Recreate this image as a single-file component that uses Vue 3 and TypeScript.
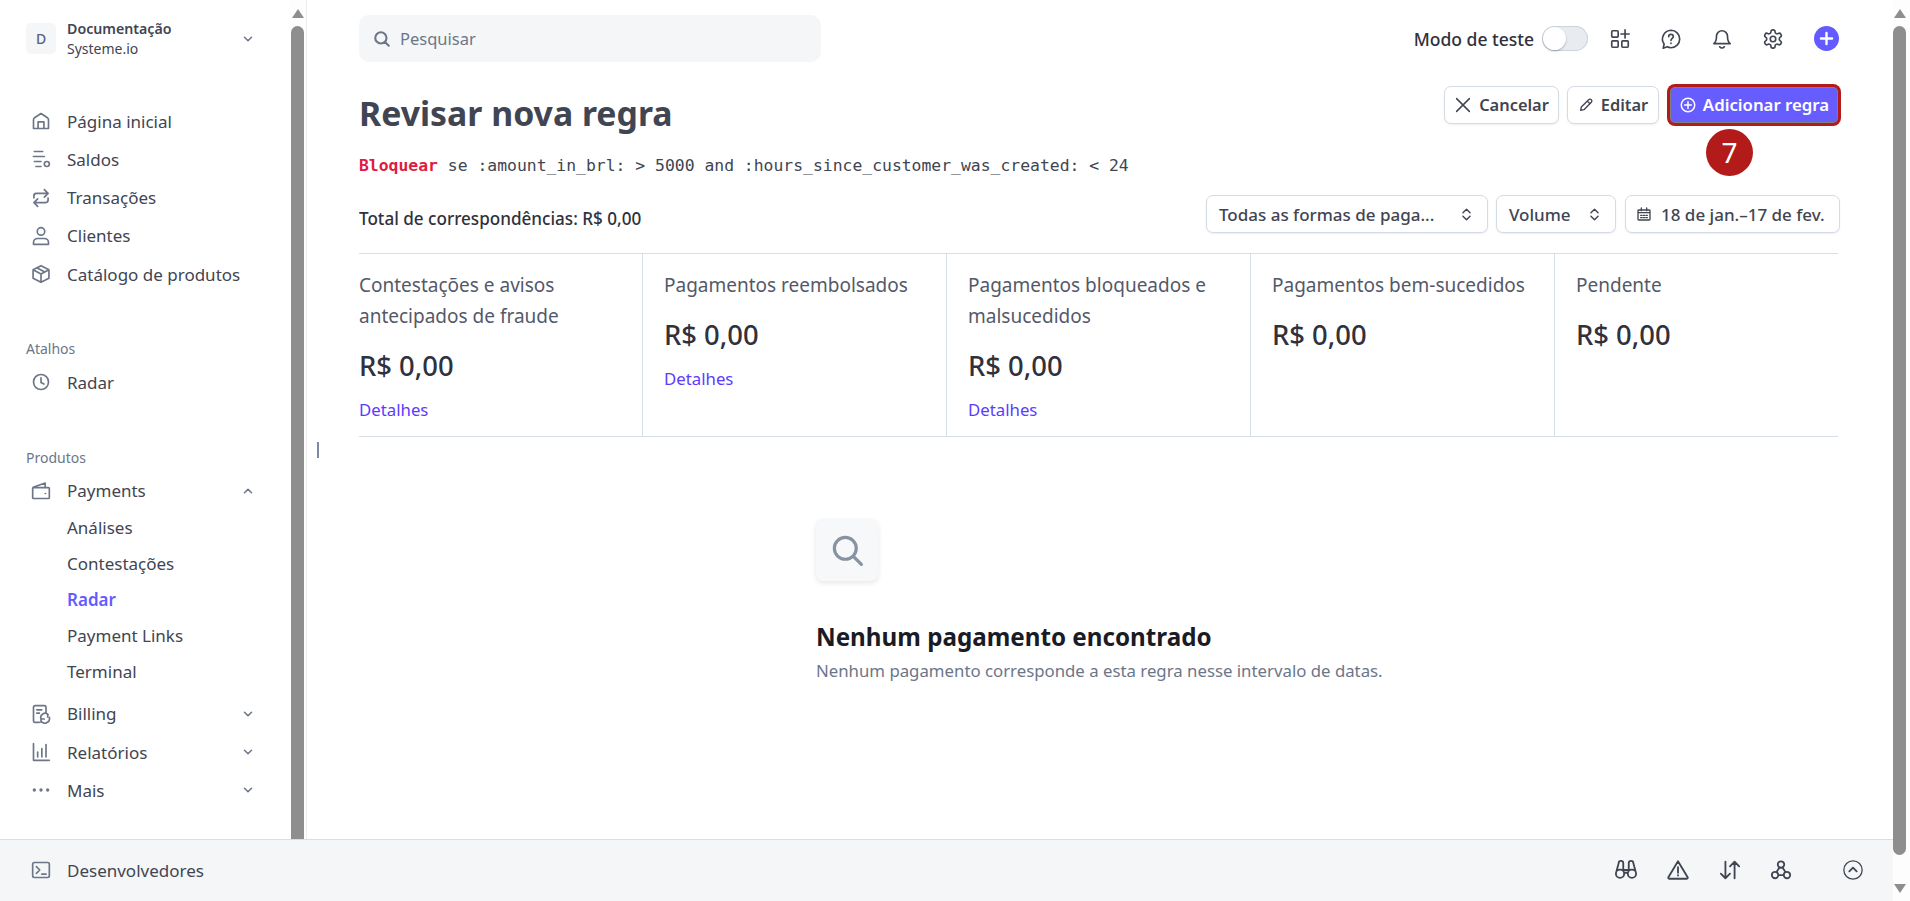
<template>
  <div class="page">
    <div class="left">
      <div class="upper">
        <aside class="sidebar">
          <div class="account">
            <div class="avatar">D</div>
            <div class="account-text">
              <div class="account-name">Documentação</div>
              <div class="account-sub">Systeme.io</div>
            </div>
            <svg class="chev" viewBox="0 0 24 24"><path d="M6 9l6 6 6-6" /></svg>
          </div>

          <nav class="group first">
            <a v-for="n in mainNav" :key="n.label" class="item">
              <svg class="ico" viewBox="0 0 24 24"><path :d="n.d" /></svg>
              <span>{{ n.label }}</span>
            </a>
          </nav>

          <nav class="group">
            <div class="group-label">Atalhos</div>
            <a class="item">
              <svg class="ico" viewBox="0 0 24 24"><path :d="icons.clock" /></svg>
              <span>Radar</span>
            </a>
          </nav>

          <nav class="group">
            <div class="group-label">Produtos</div>
            <a class="item">
              <svg class="ico" viewBox="0 0 24 24"><path :d="icons.wallet" /></svg>
              <span>Payments</span>
              <svg class="chev" viewBox="0 0 24 24"><path d="M6 15l6-6 6 6" /></svg>
            </a>
            <a v-for="s in subNav" :key="s" class="sub" :class="{ active: s === 'Radar' }">{{ s }}</a>
            <div class="more">
              <a v-for="n in moreNav" :key="n.label" class="item">
                <svg class="ico" viewBox="0 0 24 24"><path :d="n.d" /></svg>
                <span>{{ n.label }}</span>
                <svg class="chev" viewBox="0 0 24 24"><path d="M6 9l6 6 6-6" /></svg>
              </a>
            </div>
          </nav>
        </aside>

        <div class="scrollbar side-bar">
          <div class="arrow up"></div>
          <div class="thumb"></div>
        </div>

        <main class="main">
          <span class="caret"></span>
          <div class="topbar">
            <div class="search">
              <svg class="search-ico" viewBox="0 0 24 24"><path d="M18 10.500a7.500 7.500 0 1 1-15 0 7.500 7.500 0 0 1 15 0zM16 16l5 5" /></svg>
              <span>Pesquisar</span>
            </div>
            <div class="tools">
              <span class="test-label">Modo de teste</span>
              <span class="toggle"><span class="knob"></span></span>
              <svg class="tool" viewBox="0 0 24 24"><path :d="icons.apps" /></svg>
              <svg class="tool" viewBox="0 0 24 24"><path :d="icons.help" /></svg>
              <svg class="tool" viewBox="0 0 24 24"><path :d="icons.bell" /></svg>
              <svg class="tool" viewBox="0 0 24 24"><path :d="icons.gear" /></svg>
              <span class="plus-round">
                <svg viewBox="0 0 24 24"><path d="M12 5v14M5 12h14" /></svg>
              </span>
            </div>
          </div>

          <div class="head">
            <h1 class="title">Revisar nova regra</h1>
            <div class="actions">
              <button class="btn cancel" type="button">
                <svg class="btn-ico" viewBox="0 0 24 24"><path d="M3.500 3.500l17 17M20.500 3.500l-17 17" /></svg>
                Cancelar
              </button>
              <button class="btn edit" type="button">
                <svg class="btn-ico small" viewBox="0 0 24 24"><path d="M4 20l1-5L16 4a2.500 2.500 0 0 1 4 4L9 19zM14 6l4 4" /></svg>
                Editar
              </button>
              <div class="add-wrap">
                <button class="btn primary" type="button">
                  <svg class="btn-ico" viewBox="0 0 24 24"><path d="M21 12a9 9 0 1 1-18 0 9 9 0 0 1 18 0zM12 7.500v9M7.500 12h9" /></svg>
                  Adicionar regra
                </button>
                <span class="step">7</span>
              </div>
            </div>
          </div>

          <div class="rule"><b>Bloquear</b> se :amount_in_brl: &gt; 5000 and :hours_since_customer_was_created: &lt; 24</div>

          <div class="filters">
            <div class="total">Total de correspondências: R$ 0,00</div>
            <div class="selects">
              <button class="select wide" type="button">
                <span>Todas as formas de paga...</span>
                <svg class="updown" viewBox="0 0 24 24"><path d="M7 9.500l5-5 5 5M7 14.500l5 5 5-5" /></svg>
              </button>
              <button class="select vol" type="button">
                <span>Volume</span>
                <svg class="updown" viewBox="0 0 24 24"><path d="M7 9.500l5-5 5 5M7 14.500l5 5 5-5" /></svg>
              </button>
              <button class="select date" type="button">
                <svg class="cal" viewBox="0 0 24 24"><path d="M4 6h16a1 1 0 0 1 1 1v13a1 1 0 0 1-1 1H4a1 1 0 0 1-1-1V7a1 1 0 0 1 1-1zM3 10h18M8 3v4M16 3v4M7 14h2M11 14h2M15 14h2M7 17.500h2M11 17.500h2M15 17.500h2" /></svg>
                <span>18 de jan.–17 de fev.</span>
              </button>
            </div>
          </div>

          <section class="metrics">
            <div v-for="m in metrics" :key="m.label" class="metric">
              <div class="metric-label">{{ m.label }}</div>
              <div class="metric-value">R$ 0,00</div>
              <a v-if="m.link" class="metric-link">Detalhes</a>
            </div>
          </section>

          <section class="empty">
            <div class="empty-box">
              <svg viewBox="0 0 24 24"><path d="M18 10.500a7.500 7.500 0 1 1-15 0 7.500 7.500 0 0 1 15 0zM16 16l5.500 5.500" /></svg>
            </div>
            <div class="empty-title">Nenhum pagamento encontrado</div>
            <div class="empty-sub">Nenhum pagamento corresponde a esta regra nesse intervalo de datas.</div>
          </section>
        </main>
      </div>

      <footer class="footer">
        <svg class="ico" viewBox="0 0 24 24"><path :d="icons.terminal" /></svg>
        <span class="dev">Desenvolvedores</span>
        <div class="foot-tools">
          <svg class="foot" viewBox="0 0 24 24"><path :d="icons.binoculars" /></svg>
          <svg class="foot" viewBox="0 0 24 24"><path :d="icons.warning" /></svg>
          <svg class="foot" viewBox="0 0 24 24"><path :d="icons.sort" /></svg>
          <svg class="foot hook" viewBox="0 0 24 24"><path :d="icons.webhook" /></svg>
          <svg class="foot last" viewBox="0 0 24 24"><path d="M22 12a10 10 0 1 1-20 0 10 10 0 0 1 20 0z" class="thin" /><path d="M8 13.500l4-4 4 4" /></svg>
        </div>
      </footer>
    </div>

    <div class="scrollbar page-bar">
      <div class="arrow up"></div>
      <div class="thumb"></div>
      <div class="arrow down"></div>
    </div>
  </div>
</template>

<script setup lang="ts">
const icons = {
  home: 'M3 21V10.500c0-1 .4-1.800 1.300-2.400L12 3l7.700 5.100c.9.6 1.300 1.400 1.300 2.400V21zM8.500 21v-8h7v8',
  saldos: 'M4 3h10M3 9h13M4 15h8M6 21h6M22 18a3 3 0 1 1-6 0 3 3 0 0 1 6 0z',
  swap: 'M16 2l4.500 4.500L16 11M3.500 12V9.500a3 3 0 0 1 3-3h14M8 22l-4.500-4.500L8 13M20.500 12v2.500a3 3 0 0 1-3 3h-14',
  user: 'M16.500 6.500a4.500 4.500 0 1 1-9 0 4.500 4.500 0 0 1 9 0zM3 22v-2c0-2.800 2.200-5 5-5h8c2.800 0 5 2.200 5 5v2z',
  box: 'M12 2l9.500 5v10L12 22l-9.500-5V7zM2.500 7l9.500 5 9.500-5M12 12v10M7 4.500l9.500 5',
  clock: 'M21 12a9 9 0 1 1-18 0 9 9 0 0 1 18 0zM12 7v5.500l3.500 2',
  wallet: 'M2 9v11a1 1 0 0 0 1 1h18a1 1 0 0 0 1-1V9a1 1 0 0 0-1-1H3a1 1 0 0 0-1 1zM2.500 7.500L17 2.500V8M17 15h.5',
  billing: 'M10 22H5a2 2 0 0 1-2-2V4a2 2 0 0 1 2-2h11a2 2 0 0 1 2 2v7M7 7h6M7 11h3M22 16a5.500 5.500 0 0 1-9.500 5M12 18a5 5 0 0 1 8.500-5M12 22v-4h4M20 12v3.500',
  chart: 'M3 2v20h19M8 12v6M13 8v10M18 3v15',
  dots: 'M5 12a1 1 0 1 1-2 0 1 1 0 0 1 2 0zM13 12a1 1 0 1 1-2 0 1 1 0 0 1 2 0zM21 12a1 1 0 1 1-2 0 1 1 0 0 1 2 0z',
  terminal: 'M4 3h16a2 2 0 0 1 2 2v14a2 2 0 0 1-2 2H4a2 2 0 0 1-2-2V5a2 2 0 0 1 2-2zM6.500 8l4 4-4 4M13 17h5',
  apps: 'M4 3h5a1 1 0 0 1 1 1v5a1 1 0 0 1-1 1H4a1 1 0 0 1-1-1V4a1 1 0 0 1 1-1zM4 14h5a1 1 0 0 1 1 1v5a1 1 0 0 1-1 1H4a1 1 0 0 1-1-1v-5a1 1 0 0 1 1-1zM15 14h5a1 1 0 0 1 1 1v5a1 1 0 0 1-1 1h-5a1 1 0 0 1-1-1v-5a1 1 0 0 1 1-1zM17.500 2v9M13 6.500h9',
  help: 'M12 2.500a9.500 9.500 0 0 1 0 19c-1.500 0-3-.3-4.200-1L3.500 22l1-4.500A9.500 9.500 0 0 1 12 2.500zM9.500 9.500a2.500 2.500 0 0 1 5 0c0 1.800-2.500 2-2.500 4M12 16.500v.5',
  bell: 'M6 9a6 6 0 0 1 12 0c0 6 3 8 3 8H3s3-2 3-8zM9.500 20.500a3 3 0 0 0 5 0',
  gear: 'M12.220 2h-.44a2 2 0 0 0-2 2v.18a2 2 0 0 1-1 1.730l-.43.25a2 2 0 0 1-2 0l-.15-.08a2 2 0 0 0-2.730.73l-.22.38a2 2 0 0 0 .73 2.730l.15.1a2 2 0 0 1 1 1.720v.51a2 2 0 0 1-1 1.740l-.15.09a2 2 0 0 0-.73 2.730l.22.38a2 2 0 0 0 2.730.73l.15-.08a2 2 0 0 1 2 0l.43.25a2 2 0 0 1 1 1.730V20a2 2 0 0 0 2 2h.44a2 2 0 0 0 2-2v-.18a2 2 0 0 1 1-1.730l.43-.25a2 2 0 0 1 2 0l.15.08a2 2 0 0 0 2.730-.73l.22-.39a2 2 0 0 0-.73-2.730l-.15-.08a2 2 0 0 1-1-1.740v-.5a2 2 0 0 1 1-1.740l.15-.09a2 2 0 0 0 .73-2.730l-.22-.38a2 2 0 0 0-2.730-.73l-.15.08a2 2 0 0 1-2 0l-.43-.25a2 2 0 0 1-1-1.730V4a2 2 0 0 0-2-2zM15 12a3 3 0 1 1-6 0 3 3 0 0 1 6 0z',
  binoculars: 'M10 16a4.500 4.500 0 1 1-9 0 4.500 4.500 0 0 1 9 0zM23 16a4.500 4.500 0 1 1-9 0 4.500 4.500 0 0 1 9 0zM1.500 14L4 4.500a2.500 2.500 0 0 1 5 0V12h6V4.500a2.500 2.500 0 0 1 5 0L22.500 14M10 15h4',
  warning: 'M12 2.500L1.500 20a1 1 0 0 0 1 1.500h19a1 1 0 0 0 1-1.500zM12 9v6M12 17.500v.5',
  sort: 'M7 3v18M2 16l5 5 5-5M17 21V3M12 8l5-5 5 5',
  webhook: 'M15.500 6a3.500 3.500 0 1 1-7 0 3.500 3.500 0 0 1 7 0zM9 17.500a3.500 3.500 0 1 1-7 0 3.500 3.500 0 0 1 7 0zM22 17.500a3.500 3.500 0 1 1-7 0 3.500 3.500 0 0 1 7 0zM10.500 9L7 14.500M13.500 9l3.500 5.500M9 17.500h6',
};

const mainNav = [
  { label: 'Página inicial', d: icons.home },
  { label: 'Saldos', d: icons.saldos },
  { label: 'Transações', d: icons.swap },
  { label: 'Clientes', d: icons.user },
  { label: 'Catálogo de produtos', d: icons.box },
];

const subNav = ['Análises', 'Contestações', 'Radar', 'Payment Links', 'Terminal'];

const moreNav = [
  { label: 'Billing', d: icons.billing },
  { label: 'Relatórios', d: icons.chart },
  { label: 'Mais', d: icons.dots },
];

const metrics = [
  { label: 'Contestações e avisos antecipados de fraude', link: true },
  { label: 'Pagamentos reembolsados', link: true },
  { label: 'Pagamentos bloqueados e malsucedidos', link: true },
  { label: 'Pagamentos bem-sucedidos', link: false },
  { label: 'Pendente', link: false },
];
</script>

<style>
html,
body {
  margin: 0;
  background: #fff;
  overflow: hidden;
}
</style>

<style scoped>
.page {
  width: 1910px;
  height: 901px;
  display: flex;
  font-family: "Noto Sans", "Open Sans", sans-serif;
  color: #414552;
  overflow: hidden;
}

svg {
  fill: none;
  stroke: currentColor;
  stroke-width: 2;
  stroke-linecap: round;
  stroke-linejoin: round;
  flex-shrink: 0;
}

.left {
  width: 1893px;
  display: flex;
  flex-direction: column;
}

.upper {
  height: 839px;
  display: flex;
  overflow: hidden;
}

.sidebar {
  width: 289px;
  flex-shrink: 0;
  padding: 23px 0 0 26px;
  box-sizing: border-box;
}

.account {
  display: flex;
  align-items: center;
  height: 31px;
  padding-right: 34px;
}

.avatar {
  width: 30px;
  height: 31px;
  border-radius: 5px;
  background: #f5f6f8;
  color: #59647a;
  font-size: 14px;
  font-weight: 500;
  display: grid;
  place-items: center;
  margin-right: 11px;
}

.account-text {
  flex: 1;
  line-height: 20px;
}

.account-name {
  font-size: 14.2px;
  font-weight: 600;
}

.account-sub {
  font-size: 14px;
}

.chev {
  width: 14px;
  height: 14px;
  color: #6c7688;
  stroke-width: 2.6;
  margin-left: auto;
}

.group {
  margin-top: 46px;
  padding-right: 34px;
}

.group.first {
  margin-top: 48px;
}

.group-label {
  height: 20px;
  line-height: 20px;
  font-size: 14px;
  color: #6c7688;
  margin-bottom: 4px;
}

.item {
  height: 38.25px;
  display: flex;
  align-items: center;
  font-size: 17px;
}

.ico {
  width: 20px;
  height: 20px;
  color: #6c7688;
  margin-left: 5px;
  margin-right: 16px;
}

.sub {
  display: block;
  height: 36px;
  line-height: 36px;
  font-size: 17px;
  padding-left: 41px;
}

.sub.active {
  color: #635bff;
  font-weight: 600;
}

.more {
  margin-top: 5px;
}

.scrollbar {
  width: 17px;
  flex-shrink: 0;
  display: flex;
  flex-direction: column;
  align-items: flex-start;
  background: #fff;
}

.side-bar {
  padding-left: 2px;
  width: 18px;
  box-sizing: border-box;
  border-right: 1px solid #eeeeee;
  background: #fdfdfd;
}

.page-bar {
  background: #fdfdfd;
}

.arrow {
  width: 0;
  height: 0;
  border-left: 6px solid transparent;
  border-right: 6px solid transparent;
  margin-left: 1px;
}

.arrow.up {
  border-bottom: 9px solid #8e8e8e;
  margin-top: 9px;
  margin-bottom: 8px;
}

.arrow.down {
  border-top: 9px solid #8e8e8e;
  margin-top: 29px;
  margin-bottom: 8px;
}

.thumb {
  width: 13px;
  flex: 1;
  background: #8e8e8e;
  border-radius: 7px 7px 0 0;
}

.page-bar .thumb {
  border-radius: 7px;
}

.main {
  position: relative;
  flex: 1;
  min-width: 0;
  padding: 15px 53px 0 52px;
  box-sizing: border-box;
}

.caret {
  position: absolute;
  left: 10px;
  top: 442px;
  width: 2px;
  height: 16px;
  background: #7d8aa0;
}

.topbar {
  display: flex;
  align-items: center;
  justify-content: space-between;
  height: 47px;
}

.search {
  width: 462px;
  height: 47px;
  border-radius: 10px;
  background: #f5f6f8;
  display: flex;
  align-items: center;
  padding-left: 14px;
  box-sizing: border-box;
  color: #6c7688;
  font-size: 16.5px;
}

.search-ico {
  width: 18px;
  height: 18px;
  stroke-width: 2.8;
  margin-right: 9px;
}

.tools {
  display: flex;
  align-items: center;
  margin-right: 1px;
}

.test-label {
  font-size: 17.5px;
  font-weight: 500;
  color: #30313d;
  margin-right: 8px;
}

.toggle {
  width: 46px;
  height: 25px;
  border-radius: 13px;
  background: #e8ebef;
  box-shadow: inset 0 0 0 1px #cdd3dc;
  display: block;
  position: relative;
  margin-right: 21px;
}

.knob {
  position: absolute;
  left: 1px;
  top: 1px;
  width: 23px;
  height: 23px;
  border-radius: 50%;
  background: #fff;
  box-shadow: 0 1px 2px rgba(48, 49, 61, 0.35);
}

.tool {
  width: 22px;
  height: 22px;
  color: #414552;
  stroke-width: 1.8;
  margin-right: 29px;
}

.plus-round {
  width: 25px;
  height: 25px;
  border-radius: 50%;
  background: #635bff;
  color: #fff;
  display: grid;
  place-items: center;
  margin-left: 1px;
}

.plus-round svg {
  width: 19px;
  height: 19px;
  stroke-width: 3;
}

.head {
  display: flex;
  justify-content: space-between;
  align-items: flex-start;
  margin-top: 22px;
}

.title {
  margin: 5px 0 0;
  font-size: 33.8px;
  line-height: 48px;
  font-weight: 700;
  color: #414552;
}

.actions {
  display: flex;
  align-items: center;
  gap: 8px;
}

.btn {
  height: 38px;
  display: flex;
  align-items: center;
  justify-content: center;
  gap: 7px;
  padding: 0 0 2px;
  border-radius: 7px;
  border: 1px solid #d5dbe4;
  background: #fff;
  box-shadow: 0 1px 2px rgba(48, 49, 61, 0.08);
  font: 600 16.4px "Noto Sans", sans-serif;
  color: #414552;
  white-space: nowrap;
  box-sizing: border-box;
}

.btn.cancel {
  width: 115px;
}

.btn.edit {
  width: 92px;
}

.btn svg {
  margin-top: 2px;
}

.btn-ico {
  width: 18px;
  height: 18px;
}

.btn-ico.small {
  width: 16px;
  height: 16px;
}

.add-wrap {
  position: relative;
  margin-right: -1px;
  padding: 2px;
}

.btn.primary {
  width: 166px;
  height: 34px;
  background: #675dff;
  color: #fff;
  border: none;
  border-radius: 4px;
  box-shadow: 0 0 0 1px #808080, 0 0 0 4px #b31b1b;
  margin: 2px;
  font-size: 16.8px;
  gap: 6px;
}

.step {
  position: absolute;
  left: 39px;
  top: 45px;
  width: 47px;
  height: 47px;
  border-radius: 50%;
  background: #b31b1b;
  color: #fff;
  font-size: 28px;
  line-height: 47px;
  text-align: center;
}

.rule {
  margin-top: 17px;
  height: 24px;
  line-height: 24px;
  font-family: "DejaVu Sans Mono", monospace;
  font-size: 16.4px;
  white-space: pre;
}

.rule b {
  color: #df1b41;
}

.filters {
  display: flex;
  justify-content: space-between;
  align-items: flex-start;
  margin-top: 17px;
}

.total {
  padding-top: 13px;
  font-size: 17.1px;
  font-weight: 500;
  line-height: 22px;
  color: #30313d;
}

.selects {
  display: flex;
  gap: 8px;
}

.select {
  height: 38px;
  display: flex;
  align-items: center;
  justify-content: space-between;
  padding: 0 12px;
  border-radius: 7px;
  border: 1px solid #d5dbe4;
  background: #fff;
  box-shadow: 0 1px 2px rgba(48, 49, 61, 0.08);
  font: 500 17px "Noto Sans", sans-serif;
  color: #414552;
  box-sizing: border-box;
}

.select.wide {
  width: 282px;
}

.select.vol {
  width: 120px;
}

.select.date {
  width: 215px;
  margin-left: 1px;
  padding: 0 10px;
  justify-content: flex-start;
  gap: 9px;
  white-space: nowrap;
}

.updown {
  width: 17px;
  height: 17px;
}

.cal {
  width: 16px;
  height: 16px;
}

.metrics {
  margin: 20px 2px 0 0;
  display: grid;
  grid-template-columns: 283px 304px 304px 304px 1fr;
  height: 184px;
  box-sizing: border-box;
  border-top: 1px solid #d8dee8;
  border-bottom: 1px solid #d8dee8;
}

.metric {
  padding: 16px 18px 0 21px;
  border-left: 1px solid #d8dee8;
}

.metric:first-child {
  padding-left: 0;
  border-left: none;
}

.metric-label {
  font-size: 19px;
  line-height: 31px;
  color: #545969;
}

.metric-value {
  margin-top: 14px;
  font-size: 27.4px;
  line-height: 40px;
  font-weight: 500;
  color: #30313d;
}

.metric-link {
  display: block;
  margin-top: 12px;
  font-size: 16.8px;
  line-height: 24px;
  color: #5b3cff;
}

.empty {
  margin-top: 82px;
  padding-left: 457px;
}

.empty-box {
  width: 62px;
  height: 62px;
  border-radius: 7px;
  background: #f7f8fa;
  box-shadow: 0 2px 5px rgba(48, 49, 61, 0.12);
  display: grid;
  place-items: center;
  color: #8792a2;
}

.empty-box svg {
  width: 35px;
  height: 35px;
  stroke-width: 2.2;
}

.empty-title {
  margin-top: 40px;
  font-size: 24.2px;
  line-height: 32px;
  font-weight: 700;
  color: #1a1b25;
}

.empty-sub {
  margin-top: 6px;
  font-size: 16.8px;
  line-height: 24px;
  color: #6c7688;
}

.footer {
  height: 62px;
  box-sizing: border-box;
  border-top: 1px solid #d8dee8;
  background: #f5f6f8;
  display: flex;
  align-items: center;
  padding: 0 0 1px 26px;
}

.dev {
  font-size: 17px;
}

.foot-tools {
  margin-left: auto;
  display: flex;
  align-items: center;
  gap: 30px;
  margin-right: 29px;
}

.foot {
  width: 22px;
  height: 22px;
  stroke-width: 2;
}

.foot.hook {
  margin-left: -1px;
}

.foot.last {
  margin-left: 20px;
}

.thin {
  stroke-width: 1.4;
}
</style>
